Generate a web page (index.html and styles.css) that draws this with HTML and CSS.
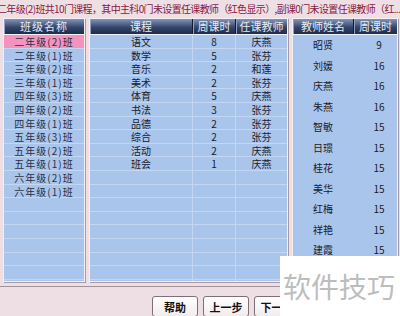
FILE: index.html
```html
<!DOCTYPE html>
<html lang="zh">
<head>
    <meta charset="UTF-8">
    <title>排课 - 任课教师</title>
    <link rel="stylesheet" href="styles.css">
</head>
<body>

<div class="title">二年级(2)班共10门课程，其中主科0门未设置任课教师（红色显示）,副课0门未设置任课教师（红...）</div>

<div class="main">
    <div class="panel classes">
        <div class="head"><span>班级名称</span></div>
        <div class="row sel"><span>二年级(2)班</span></div>
        <div class="row"><span>二年级(1)班</span></div>
        <div class="row"><span>三年级(2)班</span></div>
        <div class="row"><span>三年级(1)班</span></div>
        <div class="row"><span>四年级(3)班</span></div>
        <div class="row"><span>四年级(2)班</span></div>
        <div class="row"><span>四年级(1)班</span></div>
        <div class="row"><span>五年级(3)班</span></div>
        <div class="row"><span>五年级(2)班</span></div>
        <div class="row"><span>五年级(1)班</span></div>
        <div class="row"><span>六年级(2)班</span></div>
        <div class="row"><span>六年级(1)班</span></div>
        <div class="row"></div>
        <div class="row"></div>
        <div class="row"></div>
        <div class="row"></div>
        <div class="row"></div>
        <div class="row"></div>
        <div class="row"></div>
    </div>

    <div class="panel courses">
        <div class="head"><span>课程</span><span>周课时</span><span>任课教师</span></div>
        <div class="row"><span>语文</span><span>8</span><span>庆燕</span></div>
        <div class="row"><span>数学</span><span>5</span><span>张芬</span></div>
        <div class="row"><span>音乐</span><span>2</span><span>和莲</span></div>
        <div class="row"><span>美术</span><span>2</span><span>张芬</span></div>
        <div class="row"><span>体育</span><span>5</span><span>庆燕</span></div>
        <div class="row"><span>书法</span><span>3</span><span>张芬</span></div>
        <div class="row"><span>品德</span><span>2</span><span>张芬</span></div>
        <div class="row"><span>综合</span><span>2</span><span>张芬</span></div>
        <div class="row"><span>活动</span><span>2</span><span>庆燕</span></div>
        <div class="row"><span>班会</span><span>1</span><span>庆燕</span></div>
        <div class="row"><span></span><span></span><span></span></div>
        <div class="row"><span></span><span></span><span></span></div>
        <div class="row"><span></span><span></span><span></span></div>
        <div class="row"><span></span><span></span><span></span></div>
        <div class="row"><span></span><span></span><span></span></div>
        <div class="row"><span></span><span></span><span></span></div>
        <div class="row"><span></span><span></span><span></span></div>
        <div class="row"><span></span><span></span><span></span></div>
        <div class="row"><span></span><span></span><span></span></div>
    </div>

    <div class="panel teachers">
        <div class="head"><span>教师姓名</span><span>周课时</span></div>
        <div class="row"><span>昭贤</span><span>9</span></div>
        <div class="row"><span>刘媛</span><span>16</span></div>
        <div class="row"><span>庆燕</span><span>16</span></div>
        <div class="row"><span>朱燕</span><span>16</span></div>
        <div class="row"><span>智敏</span><span>15</span></div>
        <div class="row"><span>日璟</span><span>15</span></div>
        <div class="row"><span>桂花</span><span>15</span></div>
        <div class="row"><span>美华</span><span>15</span></div>
        <div class="row"><span>红梅</span><span>15</span></div>
        <div class="row"><span>祥艳</span><span>15</span></div>
        <div class="row"><span>建霞</span><span>15</span></div>
        <div class="row"><span></span><span></span></div>
    </div>
</div>

<div class="footer">
    <button class="btn">帮助</button>
    <button class="btn">上一步</button>
    <button class="btn">下一步</button>
</div>

<div class="watermark">软件技巧</div>

</body>
</html>
```

FILE: styles.css
```css
body {
    margin: 0;
    width: 400px;
    height: 316px;
    overflow: hidden;
    position: relative;
    background-color: #eedfe5;
    font-family: "SimSun", "Noto Sans CJK SC", "DejaVu Sans", sans-serif;
    font-size: 10px;
    color: #1a1a2a;
}
.title {
    height: 18px;
    line-height: 18px;
    margin-left: -3px;
    white-space: nowrap;
    overflow: hidden;
    color: #85203f;
    font-size: 10px;
    letter-spacing: -0.65px;
}
.main {
    display: flex;
    gap: 4px;
    padding-left: 3px;
    height: 264px;
}
.panel {
    background-color: #a9c5ec;
    border: 1px solid #f7eef2;
    box-shadow: 1px 1px 0 #a89aa2;
    overflow: hidden;
    box-sizing: border-box;
}
.classes {
    width: 82px;
}
.courses {
    width: 199px;
}
.teachers {
    width: 106px;
}
.head {
    display: flex;
    height: 15px;
    background: linear-gradient(#8496b7, #34476c 55%, #1d2b49);
    color: #e6ebf3;
    font-size: 11px;
    line-height: 15px;
    border-bottom: 1px solid #f2f4fa;
}
.head span {
    flex: 1;
    text-align: center;
    border-right: 1px solid #101a30;
    box-shadow: inset 1px 0 0 #8fa0c0;
}
.head span:last-child {
    border-right: none;
}
.classes .head span {
    letter-spacing: 1px;
}
.row {
    display: flex;
    height: 13.6px;
    line-height: 13px;
    border-bottom: 1px solid #c3d6f2;
    box-sizing: border-box;
    text-align: center;
}
.row span {
    flex: 1;
}
.classes .row span {
    letter-spacing: 1px;
    color: #2a2f40;
}
.row.sel {
    background-color: #f493bd;
}
.courses .head span:nth-child(1), .courses .row span:nth-child(1) {
    flex: 0 0 102px;
}
.courses .head span:nth-child(2), .courses .row span:nth-child(2) {
    flex: 0 0 42px;
}
.courses .row span {
    border-right: 1px solid #c3d6f2;
}
.courses .row span:last-child {
    border-right: none;
}
.teachers .head span:nth-child(1), .teachers .row span:nth-child(1) {
    flex: 0 0 60px;
}
.teachers .row {
    height: 20.5px;
    line-height: 19px;
    border-bottom: none;
}
.teachers .row span:nth-child(2) {
    padding-left: 8px;
}
.footer {
    display: flex;
    gap: 5px;
    padding: 9px 0 0 152px;
    margin-top: 4px;
    border-top: 1px solid #a0949a;
    height: 30px;
    box-sizing: border-box;
}
.btn {
    width: 46px;
    height: 21px;
    padding: 0;
    font-family: "SimSun", "Noto Sans CJK SC", sans-serif;
    font-size: 11px;
    font-weight: bold;
    color: #111;
    background: linear-gradient(#ffffff, #f2ecee);
    border: 1px solid #7e6f76;
    border-radius: 3px;
}
.watermark {
    position: absolute;
    left: 280px;
    top: 256px;
    width: 120px;
    height: 60px;
    background-color: #ffffff;
    color: #bdbdbd;
    font-family: "Noto Sans CJK SC", sans-serif;
    font-size: 28px;
    line-height: 60px;
    padding-left: 3px;
    box-sizing: border-box;
    white-space: nowrap;
}
```
